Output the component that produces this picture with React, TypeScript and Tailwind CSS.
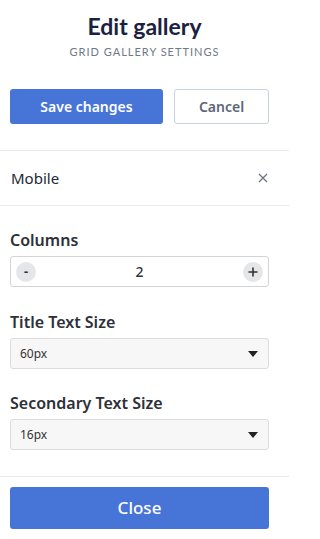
import React from "react";

export default function App() {
  return (
    <div className="w-[289px] h-[539px] bg-white overflow-hidden" style={{ fontFamily: '"Noto Sans", sans-serif' }}>
      <div className="flex flex-col items-center pt-[12px]">
        <div className="text-[23px] leading-[28px] font-bold text-[#1b2140]" style={{ fontFamily: 'Lato, sans-serif' }}>
          Edit gallery
        </div>
        <div className="text-[11px] leading-[14px] mt-[5px] tracking-[1px] text-[#6e7a89]" style={{ fontFamily: 'Lato, sans-serif' }}>
          GRID GALLERY SETTINGS
        </div>
      </div>
      <div className="flex gap-[11px] pl-[10px] pr-[20px] mt-[30px]">
        <button className="w-[153px] h-[35px] rounded-[3px] bg-[#4774d7] text-white text-[14px] font-semibold">
          Save changes
        </button>
        <button className="flex-1 h-[35px] rounded-[3px] border border-[#c5d3e0] text-[#5c6678] text-[14px] font-semibold">
          Cancel
        </button>
      </div>
      <div className="mt-[26px] border-t border-[#e6eaf0]" />
      <div className="h-[55px] flex items-center justify-between pl-[11px] pr-[20px] border-b border-[#e6eaf0]">
        <span className="text-[15px] text-[#232838]">Mobile</span>
        <svg width="10" height="10" viewBox="0 0 10 10" className="mr-[1px]">
          <path d="M1 1L9 9M9 1L1 9" stroke="#6b7280" strokeWidth="1.3" />
        </svg>
      </div>
      <div className="pl-[10px] pr-[20px]">
        <div className="mt-[23px] text-[16px] leading-[22px] font-semibold text-[#2e3038]">Columns</div>
        <div className="mt-[5px] h-[31px] border border-[#d4d4d4] rounded-[3px] flex items-center justify-between px-[5px]">
          <span className="w-[20px] h-[20px] rounded-full bg-[#e4e6e8] flex items-center justify-center text-[#333] text-[13px] font-bold leading-none">-</span>
          <span className="text-[14px] text-[#333] font-medium">2</span>
          <span className="w-[20px] h-[20px] rounded-full bg-[#e4e6e8] flex items-center justify-center">
            <svg width="10" height="10" viewBox="0 0 10 10"><path d="M5 0.5V9.5M0.5 5H9.5" stroke="#333" strokeWidth="1.6" /></svg>
          </span>
        </div>
        <div className="mt-[24px] text-[16px] leading-[22px] font-semibold text-[#2e3038]">Title Text Size</div>
        <div className="mt-[5px] h-[31px] border border-[#dcdcdc] rounded-[3px] bg-[#f7f7f7] flex items-center justify-between pl-[9px] pr-[10px]">
          <span className="text-[12px] text-[#333]">60px</span>
          <svg width="10" height="6" viewBox="0 0 10 6"><path d="M0 0H10L5 6Z" fill="#222" /></svg>
        </div>
        <div className="mt-[23px] text-[16px] leading-[22px] font-semibold text-[#2e3038]">Secondary Text Size</div>
        <div className="mt-[5px] h-[31px] border border-[#dcdcdc] rounded-[3px] bg-[#f7f7f7] flex items-center justify-between pl-[9px] pr-[10px]">
          <span className="text-[12px] text-[#333]">16px</span>
          <svg width="10" height="6" viewBox="0 0 10 6"><path d="M0 0H10L5 6Z" fill="#222" /></svg>
        </div>
      </div>
      <div className="mt-[26px] border-t border-[#e6eaf0]" />
      <div className="pl-[10px] pr-[20px] mt-[10px]">
        <button className="w-full h-[42px] rounded-[3px] bg-[#4774d7] text-white text-[17px] font-medium">Close</button>
      </div>
    </div>
  );
}
